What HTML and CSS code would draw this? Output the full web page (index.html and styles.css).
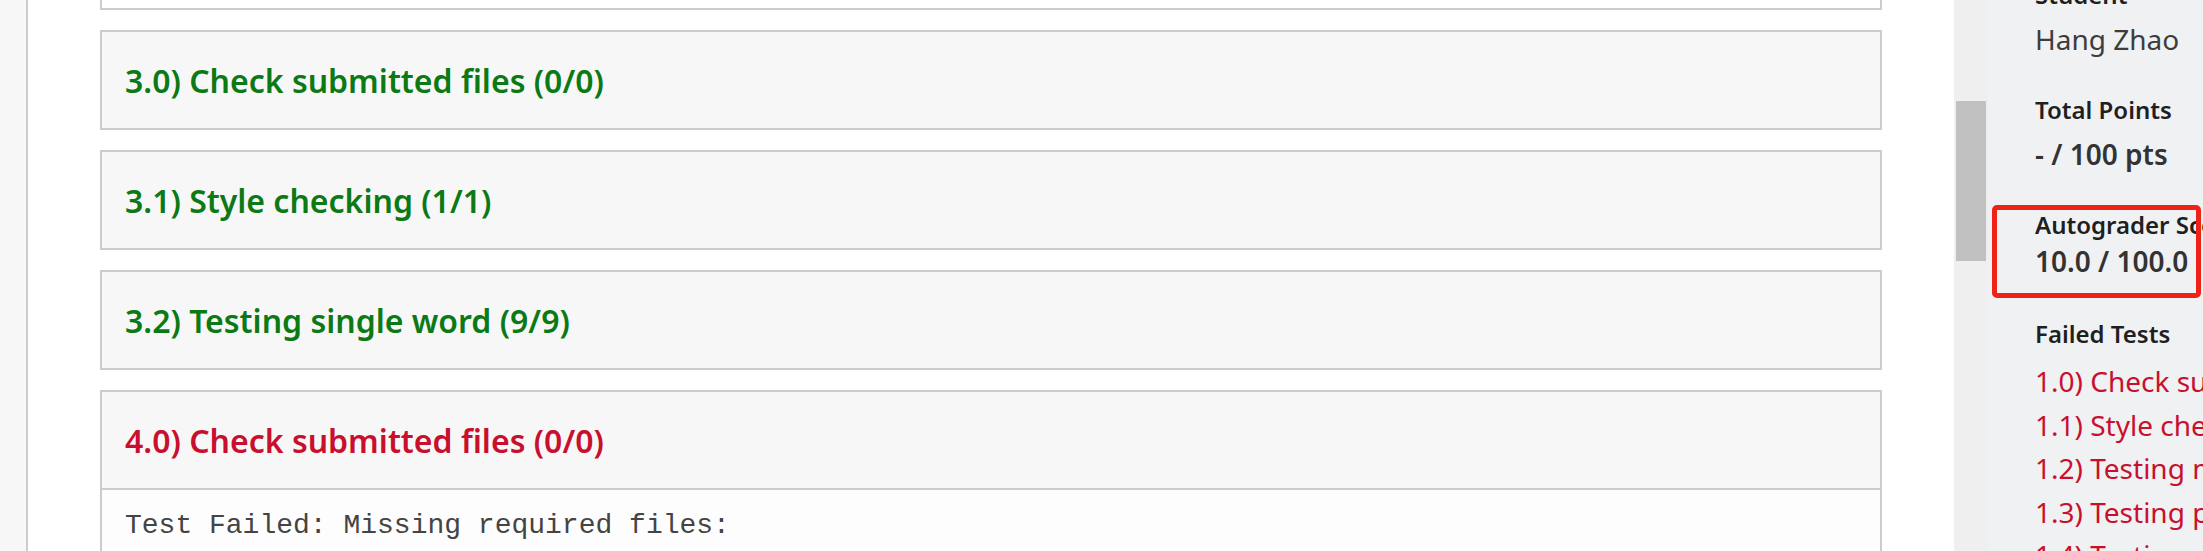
FILE: index.html
```html
<!DOCTYPE html>
<html lang="en">
<head>
<meta charset="utf-8">
<title>Autograder Results</title>
<link rel="stylesheet" href="styles.css">
</head>
<body>
  <div class="leftnav"></div>
  <main class="main">
    <div class="tests">
      <section class="card card-cut">
        <div class="card-body"></div>
      </section>
      <section class="card">
        <h2 class="card-head passed">3.0) Check submitted files (0/0)</h2>
      </section>
      <section class="card">
        <h2 class="card-head passed">3.1) Style checking (1/1)</h2>
      </section>
      <section class="card">
        <h2 class="card-head passed">3.2) Testing single word (9/9)</h2>
      </section>
      <section class="card">
        <h2 class="card-head failed has-body">4.0) Check submitted files (0/0)</h2>
        <div class="card-body">
          <pre class="output">Test Failed: Missing required files:</pre>
        </div>
      </section>
    </div>
  </main>
  <div class="scrolltrack"><div class="thumb"></div></div>
  <aside class="sidebar">
    <div class="sidebar-inner">
      <div class="field">
        <div class="label">Student</div>
        <div class="value regular">Hang Zhao</div>
      </div>
      <div class="field">
        <div class="label">Total Points</div>
        <div class="value">- / 100 pts</div>
      </div>
      <div class="field field-tight">
        <div class="label">Autograder Score</div>
        <div class="value">10.0 / 100.0</div>
      </div>
      <div class="field field-list">
        <div class="label">Failed Tests</div>
        <ul class="failed-list">
          <li>1.0) Check submitted files (0/0)</li>
          <li>1.1) Style checking (0/1)</li>
          <li>1.2) Testing multiple words (0/9)</li>
          <li>1.3) Testing punctuation (0/9)</li>
          <li>1.4) Testing empty input (0/9)</li>
        </ul>
      </div>
    </div>
    <div class="highlight"></div>
  </aside>
</body>
</html>
```

FILE: styles.css
```css
html, body {
  margin: 0;
  padding: 0;
}

body {
  width: 2203px;
  height: 551px;
  overflow: hidden;
  display: flex;
  font-family: "Noto Sans", "Open Sans", sans-serif;
  background: #ffffff;
}

.leftnav {
  width: 26px;
  flex: 0 0 26px;
  background: #f7f7f7;
  border-right: 2px solid #cccccc;
}

.main {
  flex: 0 0 1926px;
  box-sizing: border-box;
  padding: 0 72px;
  background: #ffffff;
}

.tests {
  display: flex;
  flex-direction: column;
  gap: 20px;
  margin-top: -90px;
}

.card {
  border: 2px solid #cccccc;
  background: #f7f7f7;
}

.card-cut {
  height: 96px;
  background: #ffffff;
}

.card-head {
  margin: 0;
  height: 96px;
  display: flex;
  align-items: center;
  padding: 0 23px;
  font-size: 32px;
  font-weight: 600;
  letter-spacing: 0;
}

.card-head.has-body {
  border-bottom: 2px solid #cccccc;
}

.passed {
  color: #0b7a15;
}

.failed {
  color: #c8102e;
}

.card-body {
  background: #fdfdfd;
  padding: 20px 23px;
}

.card-cut .card-body {
  padding: 0;
}

.output {
  margin: 0;
  font-family: "Liberation Mono", "Courier New", monospace;
  font-size: 28px;
  color: #444444;
}

.scrolltrack {
  flex: 0 0 34px;
  background: #efefef;
  padding: 101px 2px 0;
  box-sizing: border-box;
}

.thumb {
  height: 160px;
  background: #c1c1c1;
}

.sidebar {
  position: relative;
  flex: 1 1 auto;
  min-width: 0;
  background: #f0f1f3;
}

.sidebar-inner {
  padding-left: 47px;
  margin-top: -21px;
  white-space: nowrap;
}

.field {
  margin-bottom: 35px;
}

.field-tight {
  margin-bottom: 37px;
}

.label {
  font-size: 24px;
  line-height: 32px;
  font-weight: 600;
  color: #1f1f1f;
  margin-bottom: 8px;
}

.field-tight .label {
  margin-bottom: 0;
}

.field-list .label {
  margin-bottom: 10px;
}

.value {
  font-size: 28px;
  line-height: 40px;
  font-weight: 600;
  color: #333333;
}

.value.regular {
  font-weight: 400;
  color: #3d3d3d;
}

.failed-list {
  list-style: none;
  margin: 0;
  padding: 0;
}

.failed-list li {
  font-size: 28px;
  line-height: 43.6px;
  color: #c8102e;
}

.highlight {
  position: absolute;
  left: 4px;
  top: 205px;
  width: 209px;
  height: 93px;
  box-sizing: border-box;
  border: 5px solid #ef2218;
  border-radius: 5px;
}
```
